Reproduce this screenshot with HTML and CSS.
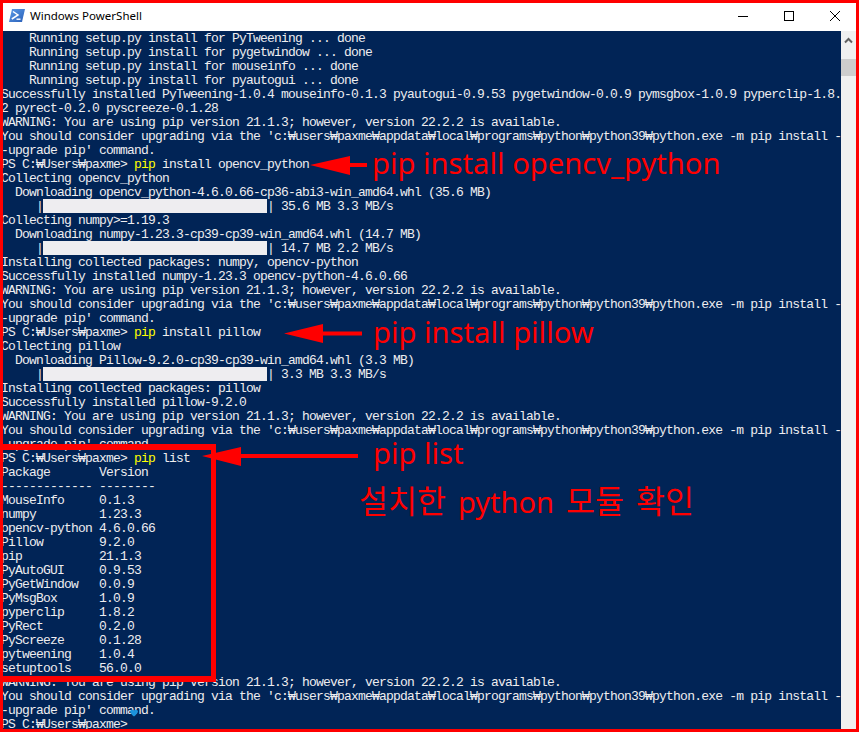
FILE: index.html
```html
<!DOCTYPE html>
<html lang="ko">
<head>
<meta charset="utf-8">
<title>Windows PowerShell</title>
<link rel="stylesheet" href="styles.css">
</head>
<body>
<div class="window">
  <header class="titlebar">
    <svg class="ps-icon" width="16" height="13" viewBox="0 0 16 13"><defs><linearGradient id="psg" x1="0" y1="0" x2="1" y2="1"><stop offset="0" stop-color="#5a9be8"/><stop offset="1" stop-color="#2a5fb8"/></linearGradient></defs><path d="M3 0H16L13 13H0Z" fill="url(#psg)"/><path d="M4 2.5L9 6L2.8 10" fill="none" stroke="#fff" stroke-width="1.5"/><path d="M7.5 10.2H11.5" stroke="#fff" stroke-width="1.4"/></svg>
    <span class="title">Windows PowerShell</span>
    <div class="controls">
      <svg class="ctl" width="46" height="12" viewBox="0 0 46 12"><path d="M18 6.500H28" stroke="#000"/></svg>
      <svg class="ctl" width="46" height="12" viewBox="0 0 46 12"><rect x="18.500" y="1.500" width="9" height="9" fill="none" stroke="#000"/></svg>
      <svg class="ctl" width="46" height="12" viewBox="0 0 46 12"><path d="M18 1L28 11M28 1L18 11" stroke="#000" fill="none"/></svg>
    </div>
  </header>
  <main class="body">
<pre class="console">    Running setup.py install for PyTweening ... done
    Running setup.py install for pygetwindow ... done
    Running setup.py install for mouseinfo ... done
    Running setup.py install for pyautogui ... done
Successfully installed PyTweening-1.0.4 mouseinfo-0.1.3 pyautogui-0.9.53 pygetwindow-0.0.9 pymsgbox-1.0.9 pyperclip-1.8.
2 pyrect-0.2.0 pyscreeze-0.1.28
WARNING: You are using pip version 21.1.3; however, version 22.2.2 is available.
You should consider upgrading via the 'c:₩users₩paxme₩appdata₩local₩programs₩python₩python39₩python.exe -m pip install -
-upgrade pip' command.
PS C:₩Users₩paxme&gt; <span class="cmd">pip</span> install opencv_python
Collecting opencv_python
  Downloading opencv_python-4.6.0.66-cp36-abi3-win_amd64.whl (35.6 MB)
     |<span class="bar"></span>| 35.6 MB 3.3 MB/s
Collecting numpy&gt;=1.19.3
  Downloading numpy-1.23.3-cp39-cp39-win_amd64.whl (14.7 MB)
     |<span class="bar"></span>| 14.7 MB 2.2 MB/s
Installing collected packages: numpy, opencv-python
Successfully installed numpy-1.23.3 opencv-python-4.6.0.66
WARNING: You are using pip version 21.1.3; however, version 22.2.2 is available.
You should consider upgrading via the 'c:₩users₩paxme₩appdata₩local₩programs₩python₩python39₩python.exe -m pip install -
-upgrade pip' command.
PS C:₩Users₩paxme&gt; <span class="cmd">pip</span> install pillow
Collecting pillow
  Downloading Pillow-9.2.0-cp39-cp39-win_amd64.whl (3.3 MB)
     |<span class="bar"></span>| 3.3 MB 3.3 MB/s
Installing collected packages: pillow
Successfully installed pillow-9.2.0
WARNING: You are using pip version 21.1.3; however, version 22.2.2 is available.
You should consider upgrading via the 'c:₩users₩paxme₩appdata₩local₩programs₩python₩python39₩python.exe -m pip install -
-upgrade pip' command.
PS C:₩Users₩paxme&gt; <span class="cmd">pip</span> list
Package       Version
------------- --------
MouseInfo     0.1.3
numpy         1.23.3
opencv-python 4.6.0.66
Pillow        9.2.0
pip           21.1.3
PyAutoGUI     0.9.53
PyGetWindow   0.0.9
PyMsgBox      1.0.9
pyperclip     1.8.2
PyRect        0.2.0
PyScreeze     0.1.28
pytweening    1.0.4
setuptools    56.0.0
WARNING: You are using pip version 21.1.3; however, version 22.2.2 is available.
You should consider upgrading via the 'c:₩users₩paxme₩appdata₩local₩programs₩python₩python39₩python.exe -m pip install -
-upgrade pip' command.
PS C:₩Users₩paxme&gt;</pre>
    <aside class="scrollbar">
      <svg class="scroll-up" width="15" height="17" viewBox="0 0 15 17"><path d="M4 11.500L7.500 8L11 11.500" fill="none" stroke="#606060" stroke-width="2"/></svg>
      <div class="thumb"></div>
    </aside>
  </main>

  <svg class="arrows" width="859" height="732" viewBox="0 0 859 732">
    <path d="M310 165L350 156V163H367V167H350V175Z" fill="#f00"/>
    <path d="M284 333.500L323 324V331.500H362V335.500H323V343Z" fill="#f00"/>
    <path d="M202 456L241 447V454H358V458H241V466Z" fill="#f00"/>
  </svg>
  <div class="note note-opencv">pip install opencv_python</div>
  <div class="note note-pillow">pip install pillow</div>
  <div class="note note-list">pip list</div>
  <div class="note note-ko"><span class="hangul">설치한</span> python <span class="hangul">모듈</span> <span class="hangul">확인</span></div>
  <div class="list-box"></div>
  <svg class="cursor-blob" width="8" height="8" viewBox="0 0 10 9"><path d="M0 2C1 0 4 0 5 1.500C6 0 9 0 10 2C10 5 7 7 5 9C3 7 0 5 0 2Z" fill="#1b93dc"/></svg>
  <div class="frame"></div>
</div>
</body>
</html>
```
FILE: styles.css
```css
html, body {
  margin: 0;
  padding: 0;
  background: #012456;
}
.window {
  position: relative;
  width: 859px;
  height: 732px;
  display: flex;
  flex-direction: column;
  overflow: hidden;
}
.titlebar {
  flex: 0 0 31px;
  display: flex;
  align-items: center;
  background: #fff;
  padding-left: 9px;
  padding-right: 1px;
  box-sizing: border-box;
}
.ps-icon {
  margin-right: 5px;
}
.title {
  font: 11.5px/16px "Noto Sans", sans-serif;
  color: #000;
}
.controls {
  margin-left: auto;
  display: flex;
}
.ctl {
  display: block;
}
.body {
  flex: 1;
  min-height: 0;
  display: flex;
}
.console {
  flex: 1;
  margin: 0;
  padding-left: 1px;
  padding-top: 1px;
  overflow: hidden;
  background: #012456;
  color: #eeedf0;
  font: 13px/14px "Liberation Mono", monospace;
  letter-spacing: -0.8px;
  white-space: pre;
}
.cmd {
  color: #ffff00;
}
.bar {
  display: inline-block;
  width: 224px;
  height: 14px;
  margin-top: -1px;
  margin-bottom: 1px;
  background: #eeedf0;
  vertical-align: top;
}
.scrollbar {
  flex: 0 0 18px;
  background: #f0f0f0;
}
.scroll-up {
  display: block;
}
.thumb {
  width: 15px;
  height: 17px;
  margin-top: 11px;
  background: #cdcdcd;
}
.arrows {
  position: absolute;
  left: 0;
  top: 0;
  pointer-events: none;
}
.note {
  position: absolute;
  color: #f00;
  font: 29.200px/36px "Noto Sans", "Noto Sans CJK KR", sans-serif;
  white-space: nowrap;
}
.note-opencv { left: 372px; top: 145px; }
.note-pillow { left: 373px; top: 314px; }
.note-list { left: 373px; top: 435px; }
.note-ko { left: 359px; top: 483px; font-size: 29px; word-spacing: 4.500px; }
.hangul { font-size: 31.500px; }
.list-box {
  position: absolute;
  left: 0;
  top: 444px;
  width: 216px;
  height: 238px;
  box-sizing: border-box;
  border: solid #f00;
  border-width: 6px 5px 6px 3px;
}
.cursor-blob {
  position: absolute;
  left: 130px;
  top: 709px;
}
.frame {
  position: absolute;
  inset: 0;
  border: 3px solid #f00;
  pointer-events: none;
}
```
